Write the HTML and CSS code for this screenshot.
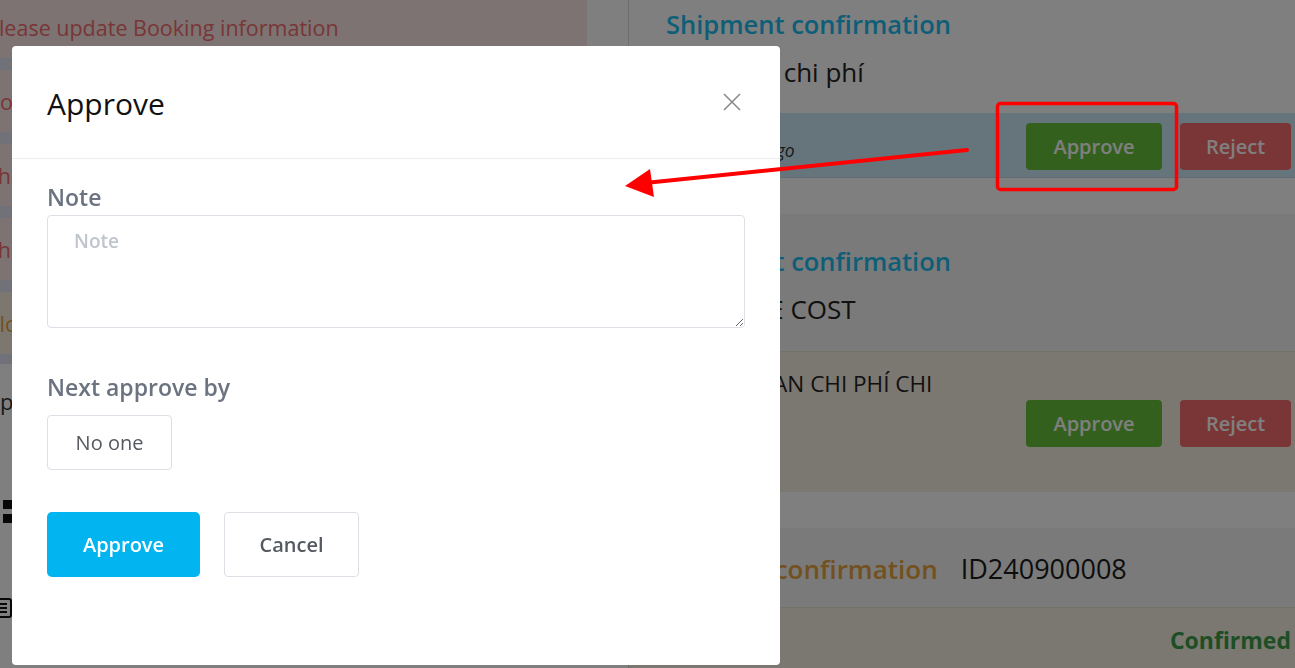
FILE: index.html
```html
<!DOCTYPE html>
<html lang="en">
<head>
<meta charset="utf-8">
<title>Approve</title>
<link rel="stylesheet" href="styles.css">
</head>
<body>
<div class="page">
  <div class="left-col">
    <div class="alerts">
      <div class="alert alert-danger">Please update Booking information</div>
      <div class="alert alert-danger">Booking information is missing</div>
      <div class="alert alert-danger">Shipment information is missing</div>
      <div class="alert alert-danger">Shipping documents are missing</div>
      <div class="alert alert-warning">Closing time is coming</div>
    </div>
    <div class="left-body">
      <div class="left-heading">Approval history</div>
      <div class="grid-icon"><span></span><span></span><span></span><span></span></div>
      <div class="list-icon"><span></span><span></span><span></span></div>
    </div>
  </div>
  <div class="gutter"></div>
  <div class="right-col">
    <div class="sec sec-top">
      <div class="sec-title">Shipment confirmation</div>
      <div class="sec-sub">Xác nhận chi phí</div>
    </div>
    <div class="row row-info">
      <div class="row-text italic">Created by Hugo</div>
      <div class="actions">
        <button class="btn btn-success">Approve</button>
        <button class="btn btn-danger">Reject</button>
      </div>
    </div>
    <div class="spacer"></div>
    <div class="sec sec-card">
      <div class="sec-title">Shipment confirmation</div>
      <div class="sec-sub">ADVANCE COST</div>
    </div>
    <div class="row row-warn row-tall">
      <div class="row-text upper">QUYẾT TOAN CHI PHÍ CHI</div>
      <div class="actions actions-low">
        <button class="btn btn-success">Approve</button>
        <button class="btn btn-danger">Reject</button>
      </div>
    </div>
    <div class="spacer"></div>
    <div class="sec sec-card sec-inline">
      <span class="sec-title orange">Booking confirmation</span>
      <span class="sec-id">ID240900008</span>
    </div>
    <div class="row row-warn row-end">
      <span class="status">Confirmed</span>
    </div>
  </div>
</div>

<div class="overlay"></div>

<div class="modal">
  <div class="modal-header">
    <h2 class="modal-title">Approve</h2>
    <button class="close" aria-label="Close">
      <svg width="20" height="20" viewBox="0 0 20 20"><path d="M2 2 L18 18 M18 2 L2 18" stroke="#8a8a8a" stroke-width="1.6" fill="none"/></svg>
    </button>
  </div>
  <div class="modal-body">
    <label class="field-label">Note</label>
    <textarea class="note" placeholder="Note"></textarea>
    <label class="field-label label-next">Next approve by</label>
    <button class="btn-outline btn-noone">No one</button>
    <div class="modal-actions">
      <button class="btn-primary">Approve</button>
      <button class="btn-outline btn-cancel">Cancel</button>
    </div>
  </div>
</div>

<svg class="annot" width="1295" height="668" viewBox="0 0 1295 668">
  <rect x="997.5" y="103.5" width="179" height="86" rx="3" fill="none" stroke="#ff0000" stroke-width="3.5"/>
  <line x1="967" y1="150" x2="645" y2="183" stroke="#ff0000" stroke-width="4" stroke-linecap="round"/>
  <polygon points="625,186 650,169 654,197" fill="#ff0000"/>
</svg>
</body>
</html>
```

FILE: styles.css
```css
* { box-sizing: border-box; }
html, body { margin: 0; padding: 0; }
body {
  width: 1295px;
  height: 668px;
  overflow: hidden;
  font-family: "Open Sans", "Noto Sans", sans-serif;
  background: #ffffff;
  color: #222;
}

.page {
  display: flex;
  height: 668px;
}

/* left column */
.left-col {
  width: 601px;
  margin-left: -14px;
  flex-shrink: 0;
  display: flex;
  flex-direction: column;
}
.alerts {
  background: #e2e4f2;
  display: flex;
  flex-direction: column;
  gap: 12px;
  margin-top: -4px;
  padding-bottom: 10px;
}
.alert {
  height: 62px;
  display: flex;
  align-items: center;
  font-size: 21.5px;
  white-space: nowrap;
  overflow: hidden;
}
.alert-danger { color: #f26c6c; background: #fae6e6; }
.alert-warning { color: #e6a23c; background: #fbf0de; }

.left-body {
  flex: 1;
  background: #ffffff;
  display: flex;
  flex-direction: column;
}
.left-heading {
  margin-top: 22px;
  font-size: 22px;
  color: #333;
  font-weight: 500;
}
.grid-icon {
  margin-top: 84px;
  margin-left: 3px;
  width: 23px;
  display: grid;
  grid-template-columns: 9px 9px;
  gap: 5px;
}
.grid-icon span { width: 9px; height: 9px; background: #111; }
.list-icon {
  margin-top: 75px;
  margin-left: 3px;
  width: 23px;
  height: 20px;
  border: 2px solid #111;
  border-radius: 3px;
  display: flex;
  flex-direction: column;
  justify-content: center;
  gap: 2px;
  padding: 0 3px;
}
.list-icon span { height: 2px; background: #111; }

.gutter {
  width: 41px;
  flex-shrink: 0;
  background: #fff;
}

/* right column */
.right-col {
  flex: 1;
  border-left: 1px solid #dcdcdc;
  display: flex;
  flex-direction: column;
  background: #fefefe;
}
.sec { padding-left: 37px; }
.sec-top { height: 113px; padding-top: 6px; }
.sec-card { background: #f4f4f4; height: 137px; padding-top: 29px; }
.sec-title {
  font-size: 25.5px;
  font-weight: 600;
  color: #1cbdf0;
  line-height: 36px;
  white-space: nowrap;
}
.sec-sub {
  font-size: 26px;
  color: #222;
  line-height: 36px;
  margin-top: 12px;
  white-space: nowrap;
}
.sec-inline {
  height: 79px;
  padding-top: 2px;
  display: flex;
  align-items: center;
  gap: 23px;
}
.sec-title.orange { color: #e6a23c; font-size: 26px; }
.sec-id { font-size: 27px; color: #1a1a1a; }

.row {
  display: flex;
  align-items: center;
  justify-content: space-between;
  padding-left: 37px;
  padding-right: 4px;
}
.row-info {
  height: 65px;
  background: #cdeaf8;
  border-bottom: 1px solid #c4dbe6;
}
.row-text { font-size: 20px; color: #333; white-space: nowrap; }
.italic { font-style: italic; font-size: 17.5px; padding-top: 10px; }
.row-warn {
  background: #f7f1e2;
  border-top: 1px solid #ebe4d4;
}
.row-tall {
  height: 141px;
  align-items: flex-start;
  padding-top: 16px;
}
.upper { font-size: 22.5px; color: #222; }
.actions { display: flex; gap: 18px; padding-top: 2px; }
.actions-low { margin-top: 30px; }
.btn {
  height: 47px;
  border: none;
  border-radius: 4px;
  color: #fff;
  font-family: "Open Sans", "Noto Sans", sans-serif;
  font-size: 20px;
  font-weight: 600;
}
.btn-success { background: #67c23a; width: 136px; }
.btn-danger { background: #f56c6c; width: 111px; }
.spacer { height: 36px; background: #fefefe; }
.row-end {
  flex: 1;
  justify-content: flex-end;
  align-items: flex-start;
  padding-top: 16px;
}
.status { font-size: 23px; font-weight: 700; color: #3a9c48; }

/* overlay & modal */
.overlay {
  position: fixed;
  inset: 0;
  background: rgba(0, 0, 0, 0.5);
}
.modal {
  position: fixed;
  left: 12px;
  top: 46px;
  width: 768px;
  height: 619px;
  background: #fff;
  border-radius: 4px;
  display: flex;
  flex-direction: column;
}
.modal-header {
  height: 113px;
  border-bottom: 1px solid #ececec;
  display: flex;
  align-items: center;
  justify-content: space-between;
  padding: 0 38px 0 35px;
}
.modal-title {
  margin: 0;
  font-size: 30px;
  font-weight: 400;
  color: #111;
  padding-top: 2px;
}
.close {
  background: none;
  border: none;
  padding: 0;
  width: 20px;
  height: 20px;
  display: flex;
}
.modal-body {
  padding: 22px 35px 0 35px;
  display: flex;
  flex-direction: column;
  align-items: flex-start;
}
.field-label {
  font-size: 23px;
  color: #6c7380;
  line-height: 32px;
  font-weight: 600;
}
.note {
  margin-top: 2px;
  width: 698px;
  height: 113px;
  border: 1px solid #dcdfe6;
  border-radius: 4px;
  padding: 12px 26px;
  font-family: "Open Sans", "Noto Sans", sans-serif;
  font-size: 19px;
  color: #333;
}
.note::placeholder { color: #c0c4cc; font-weight: 600; }
.label-next { margin-top: 43px; }
.btn-outline {
  background: #fff;
  border: 1px solid #dcdfe6;
  border-radius: 4px;
  color: #555a60;
  font-family: "Open Sans", "Noto Sans", sans-serif;
  font-size: 20px;
  font-weight: 500;
}
.btn-noone {
  margin-top: 12px;
  width: 125px;
  height: 55px;
}
.modal-actions {
  margin-top: 42px;
  display: flex;
  gap: 24px;
}
.btn-primary {
  width: 153px;
  height: 65px;
  background: #02b5f1;
  border: none;
  border-radius: 5px;
  color: #fff;
  font-family: "Open Sans", "Noto Sans", sans-serif;
  font-size: 20px;
  font-weight: 600;
}
.btn-cancel { width: 135px; height: 65px; font-weight: 600; }

.annot {
  position: fixed;
  left: 0;
  top: 0;
  pointer-events: none;
}
```
